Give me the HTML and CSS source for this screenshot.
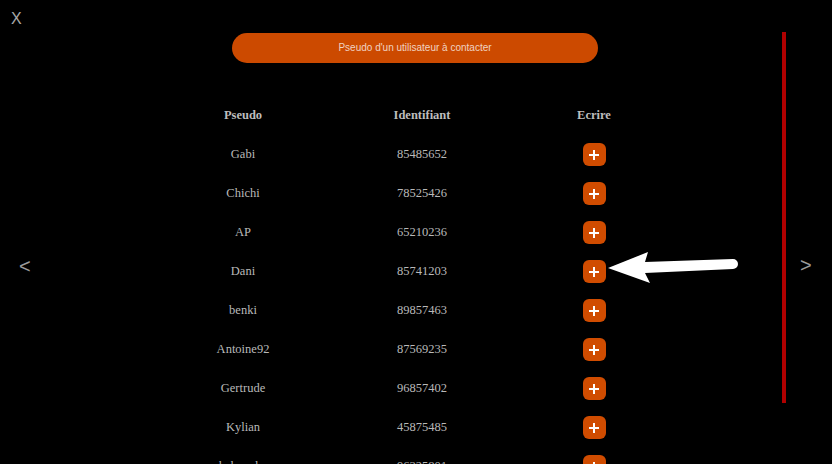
FILE: index.html
```html
<!DOCTYPE html>
<html lang="fr">
<head>
<meta charset="utf-8">
<title>Contacts</title>
<link rel="stylesheet" href="styles.css">
</head>
<body>
<div class="page">
  <aside class="side-left">
    <div class="close">X</div>
    <div class="nav prev">&lt;</div>
  </aside>
  <main class="center">
    <div class="search">Pseudo d'un utilisateur à contacter</div>
    <div class="table">
      <div class="row head"><div>Pseudo</div><div>Identifiant</div><div>Ecrire</div></div>
      <div class="row"><div>Gabi</div><div>85485652</div><div><span class="plus"></span></div></div>
      <div class="row"><div>Chichi</div><div>78525426</div><div><span class="plus"></span></div></div>
      <div class="row"><div>AP</div><div>65210236</div><div><span class="plus"></span></div></div>
      <div class="row"><div>Dani</div><div>85741203</div><div><span class="plus"></span></div></div>
      <div class="row"><div>benki</div><div>89857463</div><div><span class="plus"></span></div></div>
      <div class="row"><div>Antoine92</div><div>87569235</div><div><span class="plus"></span></div></div>
      <div class="row"><div>Gertrude</div><div>96857402</div><div><span class="plus"></span></div></div>
      <div class="row"><div>Kylian</div><div>45875485</div><div><span class="plus"></span></div></div>
      <div class="row"><div>babouche</div><div>96325801</div><div><span class="plus"></span></div></div>
    </div>
  </main>
  <aside class="side-right">
    <div class="bar"></div>
    <div class="nav next">&gt;</div>
  </aside>
  <svg class="pointer" width="832" height="464" viewBox="0 0 832 464">
    <path d="M608 268 L648 252 L645 262 L733 259 A5 5 0 0 1 733 269 L645 273 L650 283 Z" fill="#fff"/>
  </svg>
</div>
</body>
</html>
```
FILE: styles.css
```css
* { box-sizing: border-box; }
html, body { margin: 0; padding: 0; background: #000; }
.page {
  position: relative;
  width: 832px;
  height: 464px;
  overflow: hidden;
  display: grid;
  grid-template-columns: 160px 510px 162px;
  background: #000;
}
.side-left {
  display: flex;
  flex-direction: column;
  padding-left: 11px;
}
.close {
  font-family: "Liberation Sans", Arial, sans-serif;
  font-size: 16px;
  line-height: 16px;
  color: #a8a8a8;
  margin-top: 11px;
}
.nav {
  font-family: "Liberation Sans", Arial, sans-serif;
  font-size: 20px;
  line-height: 20px;
  color: #9a9a9a;
}
.prev { margin-top: 229px; padding-left: 8px; }
.center {
  display: flex;
  flex-direction: column;
}
.search {
  margin: 33px 0 0 72px;
  width: 366px;
  height: 30px;
  border-radius: 15px;
  background: #cc4a00;
  color: #f0d2c2;
  font-family: "Liberation Sans", Arial, sans-serif;
  font-size: 10px;
  display: flex;
  align-items: center;
  justify-content: center;
  padding-bottom: 1px;
}
.table {
  margin-top: 33px;
  display: flex;
  flex-direction: column;
}
.row {
  display: grid;
  grid-template-columns: 166px 192px 152px;
  height: 39px;
  align-items: center;
  justify-items: center;
  font-family: "Liberation Serif", "Times New Roman", serif;
  font-size: 12.5px;
  color: #b9b9b9;
}
.row.head { font-weight: bold; color: #bdbdbd; }
.row > div { display: flex; align-items: center; justify-content: center; }
.plus {
  position: relative;
  display: block;
  width: 23px;
  height: 23px;
  border-radius: 6px;
  background: #d04c00;
}
.plus::before, .plus::after {
  content: "";
  position: absolute;
  background: #fff;
  left: 50%;
  top: 50%;
}
.plus::before { width: 10px; height: 2px; margin: -1px 0 0 -5px; }
.plus::after { width: 2px; height: 10px; margin: -5px 0 0 -1px; }
.side-right {
  display: flex;
  align-items: flex-start;
  padding-left: 112px;
}
.bar {
  width: 4px;
  height: 371px;
  margin-top: 32px;
  background: #b00000;
}
.next { margin-top: 255px; margin-left: 14px; }
.pointer {
  position: absolute;
  left: 0;
  top: 0;
  pointer-events: none;
}
```
